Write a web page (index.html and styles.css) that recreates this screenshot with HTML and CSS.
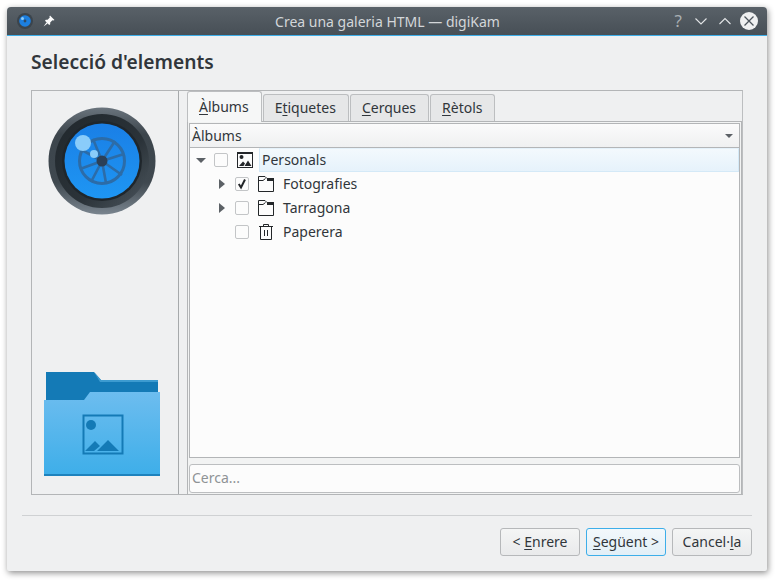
FILE: index.html
```html
<!DOCTYPE html>
<html lang="ca">
<head>
  <meta charset="UTF-8">
  <title>Crea una galeria HTML — digiKam</title>
  <link rel="stylesheet" href="styles.css">
</head>
<body>
  <div class="window">
    <header class="titlebar">
      <div class="title-left">
        <svg class="app-icon" width="16" height="16" viewBox="0 0 16 16">
          <circle cx="8" cy="8" r="8" fill="#3b444c"/>
          <circle cx="8" cy="8" r="5.8" fill="#1c7fe0"/>
          <circle cx="8" cy="8" r="1.4" fill="#2f4a63"/>
          <circle cx="5.5" cy="5.5" r="1.5" fill="#8accfa"/>
        </svg>
        <svg class="pin-icon" width="12" height="12" viewBox="0 0 12 12">
          <path d="M7 0.5 L11.5 5 L10.3 5.6 L9.4 5.2 L7.2 7.4 L7.2 9.2 L6.2 10 L2 5.8 L2.8 4.8 L4.6 4.8 L6.8 2.6 L6.4 1.7 Z M3.4 7.4 L4.6 8.6 L0.6 11.4 Z" fill="#fcfcfc"/>
        </svg>
      </div>
      <div class="title-text">Crea una galeria HTML — digiKam</div>
      <div class="title-buttons">
        <span class="help">?</span>
        <svg width="14" height="14" viewBox="0 0 14 14"><path d="M1.5 4.5 L7 10 L12.5 4.5" fill="none" stroke="#e3e5e7" stroke-width="1.1"/></svg>
        <svg width="14" height="14" viewBox="0 0 14 14"><path d="M1.5 10 L7 4.5 L12.5 10" fill="none" stroke="#e3e5e7" stroke-width="1.1"/></svg>
        <svg class="close" width="18" height="18" viewBox="0 0 18 18"><circle cx="9" cy="9" r="9" fill="#eff0f1"/><path d="M4.5 4.5 L13.5 13.5 M13.5 4.5 L4.5 13.5" stroke="#4d555c" stroke-width="1.3"/></svg>
      </div>
    </header>

    <main class="body">
      <h1 class="page-title">Selecció d'elements</h1>

      <div class="frame">
        <aside class="side">
          <svg width="108" height="108" viewBox="0 0 108 108">
            <defs>
              <linearGradient id="rim" x1="0" y1="0" x2="0" y2="1">
                <stop offset="0" stop-color="#6a747d"/>
                <stop offset="0.25" stop-color="#3c454c"/>
                <stop offset="0.7" stop-color="#3f484f"/>
                <stop offset="1" stop-color="#7a858f"/>
              </linearGradient>
              <linearGradient id="band" x1="0" y1="0" x2="1" y2="1">
                <stop offset="0" stop-color="#20272c"/>
                <stop offset="0.6" stop-color="#2b3339"/>
                <stop offset="1" stop-color="#4d575f"/>
              </linearGradient>
              <linearGradient id="lens" x1="0" y1="0" x2="0" y2="1">
                <stop offset="0" stop-color="#1a7fe6"/>
                <stop offset="1" stop-color="#1e96f3"/>
              </linearGradient>
            </defs>
            <circle cx="54" cy="54" r="53.5" fill="url(#rim)"/>
            <circle cx="54" cy="54" r="47" fill="url(#band)"/>
            <circle cx="54" cy="54" r="40" fill="#1f262b"/>
            <circle cx="54" cy="54" r="37.5" fill="url(#lens)"/>
            <circle cx="54" cy="54" r="22.5" fill="none" stroke="#2c6ca8" stroke-width="3"/>
            <path d="M54 54 L45 32 M54 54 L67 34 M54 54 L76 47 M54 54 L74 68 M54 54 L58 76 M54 54 L43 75 M54 54 L32 62 M54 54 L32 42" stroke="#2c6ca8" stroke-width="2.6"/>
            <circle cx="54" cy="54" r="5.5" fill="#2b4058"/>
            <circle cx="35" cy="36" r="8" fill="#8accfa"/>
            <circle cx="46" cy="47" r="4" fill="#8accfa"/>
          </svg>
          <svg width="116" height="104" viewBox="0 0 116 104">
            <defs>
              <linearGradient id="folder" x1="0" y1="0" x2="0" y2="1">
                <stop offset="0" stop-color="#6dbdef"/>
                <stop offset="1" stop-color="#3daee9"/>
              </linearGradient>
            </defs>
            <path d="M2 0 H50 L57 8 H114 V32 H2 Z" fill="#147ab6"/>
            <path d="M50 0 L57 8 H114 V10 H56 Z" fill="#3d9bd0"/>
            <path d="M0 28 H40 L46 20 H116 V104 H0 Z" fill="url(#folder)"/>
            <rect x="0" y="102" width="116" height="2" fill="#1d82bd"/>
            <rect x="39.5" y="43.5" width="39" height="38" fill="none" stroke="#147ab6" stroke-width="2"/>
            <circle cx="47" cy="53" r="5" fill="#147ab6"/>
            <path d="M41 79 L51 69 L56 74 L50 79 Z M53 79 L64 68 L75 79 Z" fill="#147ab6"/>
          </svg>
        </aside>

        <section class="panel">
          <div class="tabs">
            <div class="tab active"><span><u>À</u>lbums</span></div>
            <div class="tab"><span>E<u>t</u>iquetes</span></div>
            <div class="tab"><span><u>C</u>erques</span></div>
            <div class="tab"><span><u>R</u>ètols</span></div>
          </div>
          <div class="tab-body">
            <div class="view">
              <div class="combo">
                <span>Àlbums</span>
                <i class="combo-arrow"></i>
              </div>
              <div class="tree">
                <div class="row">
                  <i class="arrow-down"></i>
                  <i class="check"></i>
                  <svg class="ico" width="16" height="16" viewBox="0 0 16 16">
                    <path d="M0 0 H16 V16 H0 Z M1 2 V15 H15 V2 Z" fill="#232629" fill-rule="evenodd"/>
                    <circle cx="4.5" cy="5" r="2" fill="#232629"/>
                    <path d="M2 14 L6 9.5 L8 11.5 L6.5 14 Z M7.5 14 L11 8.5 L14.5 14 Z" fill="#232629"/>
                  </svg>
                  <span class="label selected">Personals</span>
                </div>
                <div class="row child">
                  <i class="arrow-right"></i>
                  <i class="check"><svg width="12" height="12" viewBox="0 0 12 12"><path d="M2.8 6 L5 9.5 L9 1.5" fill="none" stroke="#232629" stroke-width="2"/></svg></i>
                  <svg class="ico" width="16" height="16" viewBox="0 0 16 16">
                    <path d="M0.5 15.5 V0.5 H7 L9 2.5 H15.5 V15.5 Z M0.5 4.5 H5 L7.5 2.5" fill="none" stroke="#232629"/>
                    <rect x="9" y="2" width="7" height="3" fill="#232629"/>
                  </svg>
                  <span class="label">Fotografies</span>
                </div>
                <div class="row child">
                  <i class="arrow-right"></i>
                  <i class="check"></i>
                  <svg class="ico" width="16" height="16" viewBox="0 0 16 16">
                    <path d="M0.5 15.5 V0.5 H7 L9 2.5 H15.5 V15.5 Z M0.5 4.5 H5 L7.5 2.5" fill="none" stroke="#232629"/>
                    <rect x="9" y="2" width="7" height="3" fill="#232629"/>
                  </svg>
                  <span class="label">Tarragona</span>
                </div>
                <div class="row child">
                  <i class="no-arrow"></i>
                  <i class="check"></i>
                  <svg class="ico" width="16" height="16" viewBox="0 0 16 16">
                    <path d="M1 2.5 H15 M2.5 2.5 V15.5 H13.5 V2.5 M5.5 2.5 V0.5 H10.5 V2.5 M6.5 6 V12 M9.5 6 V12" fill="none" stroke="#232629"/>
                  </svg>
                  <span class="label">Paperera</span>
                </div>
              </div>
            </div>
            <div class="search">Cerca...</div>
          </div>
        </section>
      </div>
    </main>

    <footer class="footer">
      <div class="buttons">
        <button class="btn">&lt; <u>E</u>nrere</button>
        <button class="btn focus"><u>S</u>egüent &gt;</button>
        <button class="btn">Cancel·<u>l</u>a</button>
      </div>
    </footer>
  </div>
</body>
</html>
```

FILE: styles.css
```css
* {
  box-sizing: border-box;
  margin: 0;
  padding: 0;
}
html, body {
  width: 780px;
  height: 584px;
  overflow: hidden;
}
body {
  background: #fff;
  color: #31363b;
  font-family: "Noto Sans", sans-serif;
  font-size: 14px;
  padding: 7px 13px 13px 7px;
}
u {
  text-underline-offset: 2px;
  text-decoration-thickness: 1px;
}
i {
  display: block;
  font-style: normal;
}

.window {
  width: 760px;
  height: 564px;
  background: #eff0f1;
  border-radius: 4px 4px 2px 2px;
  box-shadow: 1px 2px 6px rgba(0, 0, 0, 0.45);
  display: flex;
  flex-direction: column;
}

/* title bar */
.titlebar {
  height: 29px;
  flex: none;
  display: flex;
  align-items: center;
  justify-content: space-between;
  padding: 0 9px 0 10px;
  background: linear-gradient(#596168, #474f56);
  border-bottom: 1px solid #3daee9;
  border-radius: 4px 4px 0 0;
}
.title-left {
  width: 110px;
  display: flex;
  align-items: center;
  gap: 10px;
}
.title-text {
  color: #d3d6d9;
  font-size: 14px;
}
.title-buttons {
  width: 110px;
  display: flex;
  align-items: center;
  justify-content: flex-end;
  gap: 10px;
}
.help {
  color: #a9aeb2;
  font-size: 17px;
  line-height: 18px;
  margin-right: 2px;
}
.close {
  margin-left: -2px;
}

/* main */
.body {
  flex: 1;
  padding: 12px 24px 0;
}
.page-title {
  font-size: 19.2px;
  font-weight: 600;
  line-height: 28px;
  height: 42px;
  color: #31363b;
}
.frame {
  display: flex;
  height: 405px;
  border: 1px solid #b3b5b7;
  border-right-color: #bcbec0;
}
.side {
  width: 147px;
  flex: none;
  display: flex;
  flex-direction: column;
  justify-content: space-between;
  align-items: center;
  padding: 16px 9px 18px 3px;
  border-right: 1px solid #a6a9ab;
}
.side svg {
  display: block;
}
.panel {
  flex: 1;
  padding: 0 0 0 8px;
  display: flex;
  flex-direction: column;
  min-width: 0;
}

/* tabs */
.tabs {
  display: flex;
  height: 31px;
  flex: none;
  position: relative;
  z-index: 1;
}
.tab {
  height: 27px;
  margin-top: 3px;
  padding: 0 12px 2px 11px;
  margin-right: 1px;
  display: flex;
  align-items: center;
  background: #e6e7e8;
  border: 1px solid #bcbec0;
  border-bottom: 0;
  border-radius: 3px 3px 0 0;
}
.tab:last-child {
  padding-right: 11px;
}
.tab.active {
  height: 31px;
  margin-top: 0;
  background: #f6f7f7;
}
.tab-body {
  flex: 1;
  display: flex;
  flex-direction: column;
  padding: 1px;
  margin-top: -1px;
  border: 1px solid #b3b5b7;
  background: #f2f3f3;
}

.view {
  height: 335px;
  flex: none;
  background: #fcfcfc;
  border: 1px solid #b3b5b7;
}
.combo {
  height: 24px;
  display: flex;
  align-items: center;
  justify-content: space-between;
  padding: 0 6px 0 2px;
  background: linear-gradient(#fbfbfb, #eff0f1);
  border-bottom: 1px solid #b3b5b7;
}
.combo-arrow {
  width: 0;
  height: 0;
  border-left: 4px solid transparent;
  border-right: 4px solid transparent;
  border-top: 4px solid #5c6166;
}

/* tree */
.row {
  height: 24px;
  display: flex;
  align-items: center;
}
.row.child {
  padding-left: 21px;
}
.arrow-down, .no-arrow {
  width: 10px;
  flex: none;
  margin-left: 6px;
}
.arrow-down {
  height: 0;
  border-left: 5px solid transparent;
  border-right: 5px solid transparent;
  border-top: 5px solid #5c6166;
}
.no-arrow {
  height: 10px;
}
.arrow-right {
  flex: none;
  width: 0;
  height: 0;
  margin: 0 2px 0 8px;
  border-top: 5px solid transparent;
  border-bottom: 5px solid transparent;
  border-left: 6px solid #5c6166;
}
.check {
  width: 14px;
  height: 14px;
  flex: none;
  margin-left: 8px;
  border: 1px solid #c3c5c7;
  border-radius: 2px;
  background: #fcfcfc;
}
.check svg {
  display: block;
}
.ico {
  flex: none;
  margin-left: 9px;
}
.label {
  margin-left: 9px;
  padding-bottom: 2px;
}
.label.selected {
  flex: 1;
  height: 24px;
  line-height: 22px;
  margin-left: 6px;
  padding: 0 0 0 2px;
  background: linear-gradient(#f3f9fd, #e6f2fb);
  border: 1px solid #d4e9f7;
  border-top-color: #e4f1fa;
}

/* search */
.search {
  height: 29px;
  margin-top: 6px;
  padding: 0 0 2px 2px;
  display: flex;
  align-items: center;
  background: #fcfcfc;
  border: 1px solid #bcbec0;
  border-radius: 3px;
  color: #8f9396;
}

/* bottom */
.footer {
  flex: none;
  margin: 20px 15px 0;
  height: 56px;
  border-top: 1px solid #cfd1d3;
}
.buttons {
  display: flex;
  justify-content: flex-end;
  gap: 6px;
  padding-top: 12px;
}
.btn {
  width: 80px;
  height: 28px;
  padding-bottom: 2px;
  font: inherit;
  font-feature-settings: "locl" 0;
  font-variant-ligatures: none;
  color: #31363b;
  background: linear-gradient(#f4f5f5, #e9eaeb);
  border: 1px solid #b6b8ba;
  border-radius: 3px;
}
.btn.focus {
  border-color: #3daee9;
  background: linear-gradient(#f3f8fb, #e2eff7);
}
```
